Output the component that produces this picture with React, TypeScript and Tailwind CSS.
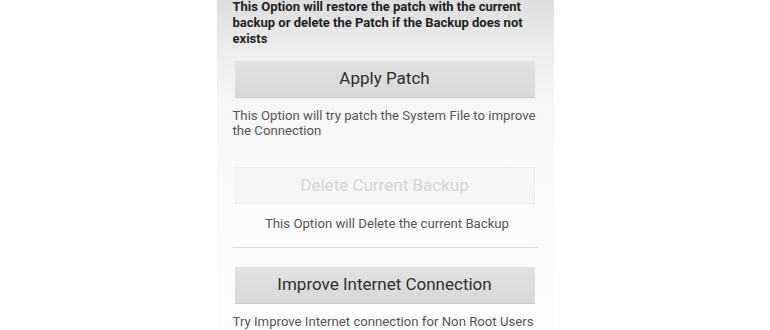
const font = { fontFamily: 'Roboto, "Liberation Sans", sans-serif' }

const Button = ({ label, disabled }: { label: string; disabled?: boolean }) => (
  <div
    className={`ml-[2px] w-[300px] h-[37px] flex items-center justify-center text-[17px] ${
      disabled
        ? 'bg-[#f5f5f5] text-[#d4d4d4] border border-[#ececec]'
        : 'bg-gradient-to-b from-[#e2e2e2] to-[#d8d8d8] text-[#2e2e2e] border-b border-[#c9c9c9]'
    }`}
  >
    {label}
  </div>
)

export default function App() {
  return (
    <div className="w-[770px] h-[330px] bg-white flex justify-center overflow-hidden" style={font}>
      <div className="w-[337px] h-[330px] bg-[linear-gradient(to_bottom,#dedede_0px,#efefef_60px,#f7f7f7_110px,#fbfbfb_200px,#fdfdfd_330px)] pl-4 pr-[12px]">
        <p className="mt-[-1px] text-[13px] leading-[16px] font-bold text-[#1e1e1e]">
          This Option will restore the patch with the current backup or delete the Patch if the Backup does not exists
        </p>
        <div className="mt-[14px]">
          <Button label="Apply Patch" />
        </div>
        <p className="mt-[10px] text-[13.2px] leading-[15px] text-[#555]">
          This Option will try patch the System File to improve the Connection
        </p>
        <div className="mt-[29px]">
          <Button label="Delete Current Backup" disabled />
        </div>
        <p className="mt-[12px] text-[13.2px] leading-[15px] text-[#555] text-center">
          This Option will Delete the current Backup
        </p>
        <div className="mt-[16px] w-[305px] h-px bg-[#bfe0ee]" />
        <div className="mt-[19px]">
          <Button label="Improve Internet Connection" />
        </div>
        <p className="mt-[10px] text-[13.2px] leading-[15px] text-[#555] whitespace-nowrap">
          Try Improve Internet connection for Non Root Users
        </p>
      </div>
    </div>
  )
}
